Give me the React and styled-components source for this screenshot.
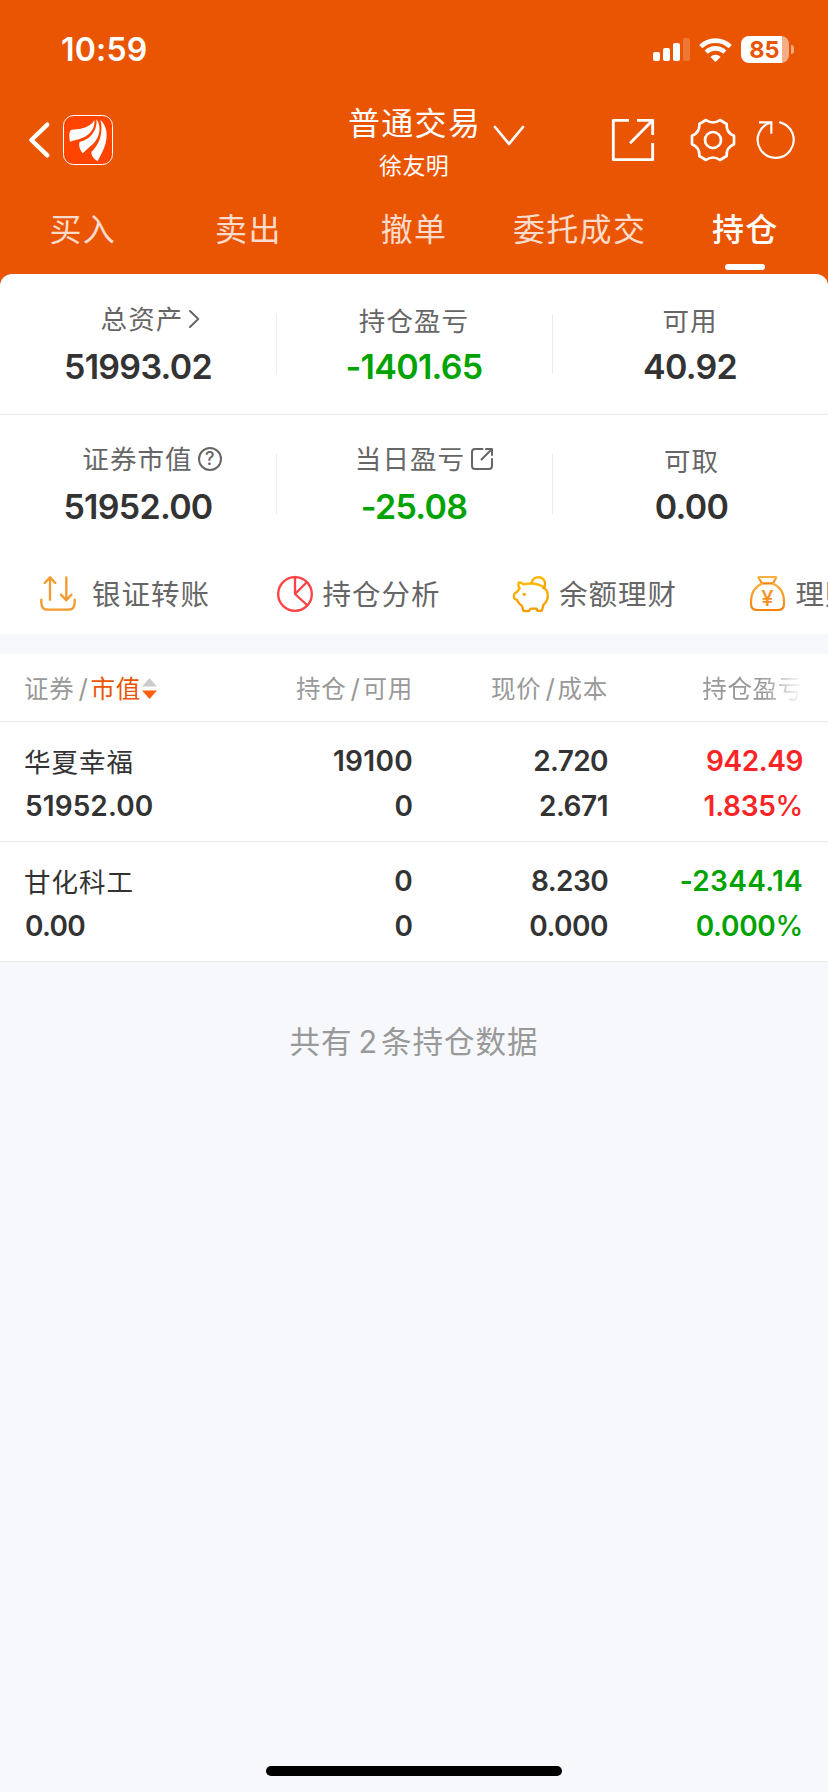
import React, { useState } from "react";
import styled, { createGlobalStyle } from "styled-components";

const GlobalStyle = createGlobalStyle`
  * {
    box-sizing: border-box;
  }
  body {
    margin: 0;
    background: #f6f8fb;
    font-family: Inter, "Noto Sans CJK SC", sans-serif;
    color: #333;
  }
`;

const Screen = styled.div`
  width: 828px;
  height: 1792px;
  display: flex;
  flex-direction: column;
  overflow: hidden;
`;

const Top = styled.div`
  background: #ea5504;
`;

const StatusBar = styled.div`
  height: 99px;
  padding: 0 34px 0 61px;
  display: flex;
  align-items: center;
  justify-content: space-between;
  color: #fff;
`;

const Time = styled.div`
  font-size: 32px;
  font-weight: 600;
  line-height: 40px;
  letter-spacing: 0.2px;
`;

const StatusIcons = styled.div`
  display: flex;
  align-items: center;
  gap: 9px;
`;

const Battery = styled.div`
  display: flex;
  align-items: center;
  gap: 2px;
`;

const BatteryBody = styled.div`
  width: 48px;
  height: 27px;
  padding-right: 1px;
  border-radius: 8px;
  background: linear-gradient(90deg, #fff 41px, #f5ad86 41px);
  color: #ea5504;
  font-size: 23.5px;
  font-weight: 700;
  line-height: 28px;
  text-align: center;
`;

const BatteryTip = styled.div`
  width: 3px;
  height: 9px;
  border-radius: 0 4px 4px 0;
  background: #f5ad86;
`;

const NavBar = styled.div`
  height: 82px;
  padding: 0 33px 0 28px;
  display: grid;
  grid-template-columns: 320px 1fr 185px;
  align-items: center;
  color: #fff;
`;

const NavLeft = styled.div`
  display: flex;
  align-items: center;
  gap: 13px;
`;

const NavTitle = styled.div`
  padding-top: 3px;
`;

const TitleText = styled.div`
  display: flex;
  align-items: center;
  gap: 13px;
  font-size: 32px;
  line-height: 36px;
  letter-spacing: 1.3px;
`;

const ChevronWrap = styled.span`
  display: flex;
  padding-top: 24px;
  height: 36px;
  align-items: center;
`;

const UserName = styled.div`
  margin-top: 12px;
  padding-left: 31px;
  font-size: 23px;
  line-height: 24px;
  letter-spacing: 0.4px;
`;

const NavRight = styled.div`
  display: flex;
  align-items: center;
  justify-content: flex-end;
`;

const Tabs = styled.div`
  height: 93px;
  display: grid;
  grid-template-columns: repeat(5, 1fr);
`;

const Tab = styled.div`
  display: flex;
  flex-direction: column;
  align-items: center;
  padding-top: 29px;
  font-size: 32px;
  line-height: 40px;
  letter-spacing: 1.3px;
  white-space: nowrap;
  cursor: pointer;
  font-weight: ${(props) => (props.$active ? 500 : 400)};
  color: ${(props) => (props.$active ? "#fff" : "#fbdccc")};
  &:after {
    content: "";
    width: 40px;
    height: 6px;
    margin-top: 14px;
    border-radius: 3px;
    background: ${(props) => (props.$active ? "#fff" : "transparent")};
  }
`;

const Summary = styled.div`
  background: #fff;
  border-radius: 12px 12px 0 0;
`;

const SummaryRow = styled.div`
  height: 140px;
  display: grid;
  grid-template-columns: repeat(3, 276px);
  & + & {
    box-shadow: inset 0 1px #ebebeb;
  }
`;

const Metric = styled.div`
  display: flex;
  flex-direction: column;
  align-items: center;
  padding-top: ${(props) => (props.$raised ? 30 : 32)}px;
  & + & {
    background: linear-gradient(#ebebeb, #ebebeb) 0 40px / 1px 60px no-repeat;
  }
`;

const MetricLabel = styled.div`
  display: flex;
  align-items: center;
  gap: ${(props) => props.$gap || 0}px;
  padding-left: ${(props) => props.$shift || 0}px;
  margin-bottom: ${(props) => (props.$raised ? 13 : 11)}px;
  font-size: 26.5px;
  line-height: 30px;
  letter-spacing: 1.1px;
  color: #666;
`;

const MetricValue = styled.div`
  padding-left: ${(props) => props.$shift || 0}px;
  font-size: 34px;
  font-weight: 600;
  line-height: 40px;
  letter-spacing: -0.7px;
  color: ${(props) => props.$color || "#333"};
`;

const QuickMenu = styled.div`
  height: 80px;
  padding-left: 40px;
  background: #fff;
  display: flex;
  align-items: center;
  overflow: hidden;
`;

const QuickItem = styled.div`
  flex: none;
  width: 236.5px;
  display: flex;
  align-items: center;
  gap: ${(props) => props.$gap || 10}px;
`;

const QuickName = styled.div`
  padding-top: 2px;
  font-size: 28.5px;
  line-height: 36px;
  letter-spacing: 1px;
  color: #666;
  white-space: nowrap;
`;

const Table = styled.div`
  margin-top: 20px;
  background: #fff;
`;

const TableHead = styled.div`
  height: 68px;
  padding: 2px 25px 0;
  display: grid;
  grid-template-columns: 193px 195px 195px 195px;
  align-items: center;
  border-bottom: 1px solid #ebebeb;
  font-size: 24.5px;
  line-height: 32px;
  letter-spacing: 0.7px;
  color: #999;
`;

const HeadCell = styled.div`
  display: flex;
  align-items: center;
  justify-content: ${(props) => (props.$left ? "flex-start" : "flex-end")};
  margin-left: ${(props) => (props.$left ? -1 : 0)}px;
  ${(props) =>
    props.$fade &&
    "mask-image: linear-gradient(90deg, #000 calc(100% - 40px), transparent);"}
`;

const Slash = styled.span`
  margin: 0 2px 0 4px;
  font-size: 26px;
`;

const Sorted = styled.span`
  color: #ea5504;
  margin-right: 1px;
`;

const TableRow = styled.div`
  height: 120px;
  padding: 17px 25px 0;
  display: grid;
  grid-template-columns: 193px 195px 195px 195px;
  border-bottom: 1px solid #ebebeb;
`;

const Cell = styled.div`
  display: flex;
  flex-direction: column;
  align-items: ${(props) => (props.$left ? "flex-start" : "flex-end")};
  font-size: 28px;
  font-weight: 600;
  line-height: 45px;
  color: ${(props) => props.$color || "#333"};
`;

const Num = styled.div`
  letter-spacing: ${(props) => props.$track || 0}px;
`;

const StockName = styled.div`
  padding-top: 1px;
  margin: 0 0 -1px -1px;
  font-size: 26.5px;
  font-weight: 400;
  letter-spacing: 1px;
`;

const Percent = styled.span`
  font-weight: 500;
`;

const Footer = styled.div`
  flex: 1;
  padding-top: 60px;
  font-size: 30.5px;
  line-height: 40px;
  letter-spacing: 1px;
  text-align: center;
  color: #999;
`;

const FooterCount = styled.span`
  margin: 0 3px 0 6px;
`;

const HomeBar = styled.div`
  width: 296px;
  height: 10px;
  margin: 0 auto 16px;
  border-radius: 5px;
  background: #000;
`;

const Icon = styled.svg`
  flex: none;
  display: block;
  overflow: visible;
  fill: none;
  stroke: ${(props) => props.$stroke || "#fff"};
  stroke-linecap: round;
  stroke-linejoin: round;
  margin-left: ${(props) => props.$ml || 0}px;
`;

const SignalIcon = () => (
  <Icon width="37" height="23" viewBox="0 0 37 23">
    <g fill="#fff" stroke="none">
      <rect x="0" y="14" width="7" height="9" rx="2" />
      <rect x="10" y="10" width="7" height="13" rx="2" />
      <rect x="20" y="5" width="7" height="18" rx="2" />
      <rect x="30" y="0" width="7" height="23" rx="2" opacity="0.2" />
    </g>
  </Icon>
);

const WifiIcon = () => (
  <Icon width="33" height="24" viewBox="0 0 33 24">
    <g strokeWidth="4.6" strokeLinecap="butt">
      <path d="M1.8 8.6A21 21 0 0 1 31.2 8.6" />
      <path d="M7.2 14.2A13.2 13.2 0 0 1 25.8 14.2" />
    </g>
    <path
      d="M16.5 24L11.4 18.9A7.4 7.4 0 0 1 21.6 18.9Z"
      fill="#fff"
      stroke="none"
    />
  </Icon>
);

const BackIcon = () => (
  <Icon width="22" height="36" viewBox="0 0 66 108" strokeWidth="13">
    <path d="M58 8L10 54L58 100" />
  </Icon>
);

const LogoIcon = () => (
  <Icon width="50" height="50" viewBox="0 0 150 150">
    <rect
      x="1.5"
      y="1.5"
      width="147"
      height="147"
      rx="30"
      fill="#ff4400"
      strokeWidth="3"
    />
    <g fill="#fff" stroke="none">
      <path d="M94 14C88 30 66 42 27 44C19 45 17 58 21 80C44 72 68 70 84 50C93 38 96 26 94 14Z" />
      <path d="M100 13C113 27 114 58 96 80C86 92 70 103 59 115C50 102 46 90 50 81C66 76 80 70 90 54C100 40 102 26 100 13Z" />
      <path d="M112 15C130 30 135 58 128 84C122 106 112 122 104 138C92 132 85 122 85 111C96 100 108 84 113 62C117 44 116 28 112 15Z" />
    </g>
  </Icon>
);

const ChevronDownIcon = () => (
  <Icon
    width="30"
    height="20"
    viewBox="0 0 90 60"
    strokeWidth="8"
    strokeLinejoin="miter"
  >
    <path d="M3 3L45 54L87 3" />
  </Icon>
);

const ShareIcon = () => (
  <Icon width="42" height="42" viewBox="0 0 126 126" strokeWidth="8.5">
    <path d="M51 4H4V122H122V72" strokeLinecap="butt" />
    <path d="M75 4H122V48M122 4L54 73" strokeLinecap="butt" />
  </Icon>
);

const GearIcon = () => (
  <Icon
    $ml={37}
    width="44"
    height="44"
    viewBox="-66 -66 132 132"
    strokeWidth="8"
  >
    <path d="M-21-60Q0-45 21-60L41-48Q39-22 63-12.500L63 12.500Q39 22 41 48L21 60Q0 45-21 60L-41 48Q-39 22-63 12.500L-63-12.500Q-39-22-41-48Z" />
    <circle r="24" />
  </Icon>
);

const RefreshIcon = () => (
  <Icon $ml={22} width="38" height="38" viewBox="0 0 114 114" strokeWidth="6.500">
    <path d="M69 4A54 54 0 1 1 43 4" />
    <path d="M6 4H43V38" strokeLinecap="butt" />
  </Icon>
);

const ArrowRightIcon = () => (
  <Icon $stroke="#666" width="10" height="18" viewBox="0 0 10 18" strokeWidth="2">
    <path d="M1 1L9.300 9L1 17" />
  </Icon>
);

const HelpMark = styled.span`
  width: 24px;
  height: 24px;
  border: 2px solid #666;
  border-radius: 50%;
  font-size: 18px;
  font-weight: 500;
  line-height: 20px;
  letter-spacing: 0;
  text-align: center;
`;

const OpenIcon = () => (
  <Icon $stroke="#666" width="22" height="22" viewBox="0 0 22 22" strokeWidth="2">
    <path d="M11.500 1H4Q1 1 1 4V18Q1 21 4 21H18Q21 21 21 18V11" />
    <path d="M15 1H21V7M21 1L10.500 11.500" />
  </Icon>
);

const TransferIcon = () => (
  <Icon $stroke="#f39a2e" width="36" height="36" viewBox="0 0 108 108" strokeWidth="7">
    <path d="M30 71V5M14 21L30 4L46 21" />
    <path d="M79 4V73M63 56L79 73L94 56" />
    <path d="M4 71V80Q4 101 24 101H84Q104 101 104 80V71" />
  </Icon>
);

const PieIcon = () => (
  <Icon $stroke="#ff4246" width="36" height="36" viewBox="0 0 108 108" strokeWidth="7">
    <circle cx="54" cy="54" r="50.500" />
    <path d="M54 3V54L90 18M54 54L90 87" />
  </Icon>
);

const PigIcon = () => (
  <Icon $stroke="url(#pigFill)" width="36" height="36" viewBox="0 0 108 108" strokeWidth="7">
    <defs>
      <linearGradient id="pigFill" x1="0" y1="0" x2="0" y2="1">
        <stop offset="0" stopColor="#ffb800" />
        <stop offset="1" stopColor="#f79a05" />
      </linearGradient>
    </defs>
    <path d="M17 20Q23 18 32 25C65 18 98 27 104 52C107 70 99 80 91 87L87 103Q80 106 73 104L71 98H53L49 104Q40 107 31 104L27 90Q17 83 12 72L4 68Q1 60 4 54Q15 46 20 37Q14 29 17 20Z" />
    <path d="M56 21C58-3 98-2 96 24Q96 31 92 37" />
    <circle cx="34" cy="55" r="5" fill="#f9a400" stroke="none" />
  </Icon>
);

const BagIcon = () => (
  <Icon $stroke="url(#bagFill)" width="36" height="36" viewBox="0 0 108 108" strokeWidth="6.500">
    <defs>
      <linearGradient id="bagFill" x1="0" y1="0" x2="0" y2="1">
        <stop offset="0" stopColor="#fbb040" />
        <stop offset="1" stopColor="#f5820a" />
      </linearGradient>
    </defs>
    <path d="M27 3H77Q80 3 78 6L69 22H36L26 6Q25 3 27 3Z" />
    <path d="M36 23C14 32 3 50 3 77V84Q3 102 21 102H84Q102 102 102 84V77C102 50 91 32 69 23" />
    <text
      x="52"
      y="90"
      fontSize="66"
      fontWeight="500"
      textAnchor="middle"
      fill="#f7901e"
      stroke="none"
    >
      ¥
    </text>
  </Icon>
);

const SortIcon = () => (
  <Icon width="15" height="21" viewBox="0 0 15 21">
    <g stroke="none">
      <path d="M7.500 0L15 8.500H0Z" fill="#ccc" />
      <path d="M0 12.500H15L7.500 21Z" fill="#ff6010" />
    </g>
  </Icon>
);

const GREEN = "#00a300";
const RED = "#fa2425";

const tabs = ["买入", "卖出", "撤单", "委托成交", "持仓"];

const metrics = [
  [
    { label: "总资产", value: "51993.02", icon: <ArrowRightIcon />, gap: 6, shift: 24 },
    { label: "持仓盈亏", value: "-1401.65", color: GREEN },
    { label: "可用", value: "40.92" },
  ],
  [
    { label: "证券市值", value: "51952.00", icon: <HelpMark>?</HelpMark>, gap: 5, shift: 28 },
    { label: "当日盈亏", value: "-25.08", color: GREEN, icon: <OpenIcon />, gap: 6, shift: 20 },
    { label: "可取", value: "0.00", offset: 3 },
  ],
];

const quickLinks = [
  { name: "银证转账", icon: <TransferIcon />, gap: 16 },
  { name: "持仓分析", icon: <PieIcon /> },
  { name: "余额理财", icon: <PigIcon /> },
  { name: "理财", icon: <BagIcon /> },
];

const holdings = [
  {
    name: "华夏幸福",
    marketValue: "51952.00",
    amount: ["19100", "0"],
    price: ["2.720", "2.671"],
    profit: ["942.49", "1.835"],
    track: { marketValue: 0.1, profit: -0.4 },
    color: RED,
  },
  {
    name: "甘化科工",
    marketValue: "0.00",
    amount: ["0", "0"],
    price: ["8.230", "0.000"],
    profit: ["-2344.14", "0.000"],
    track: { marketValue: -0.7, profit: 0.3 },
    color: GREEN,
  },
];

const App = () => {
  const [activeTab, setActiveTab] = useState("持仓");

  return (
    <Screen>
      <GlobalStyle />
      <Top>
        <StatusBar>
          <Time>10:59</Time>
          <StatusIcons>
            <SignalIcon />
            <WifiIcon />
            <Battery>
              <BatteryBody>85</BatteryBody>
              <BatteryTip />
            </Battery>
          </StatusIcons>
        </StatusBar>
        <NavBar>
          <NavLeft>
            <BackIcon />
            <LogoIcon />
          </NavLeft>
          <NavTitle>
            <TitleText>
              普通交易
              <ChevronWrap>
                <ChevronDownIcon />
              </ChevronWrap>
            </TitleText>
            <UserName>徐友明</UserName>
          </NavTitle>
          <NavRight>
            <ShareIcon />
            <GearIcon />
            <RefreshIcon />
          </NavRight>
        </NavBar>
        <Tabs>
          {tabs.map((tab) => (
            <Tab
              key={tab}
              $active={tab === activeTab}
              onClick={() => setActiveTab(tab)}
            >
              {tab}
            </Tab>
          ))}
        </Tabs>
        <Summary>
          {metrics.map((row, index) => (
            <SummaryRow key={"row_" + index}>
              {row.map((item) => (
                <Metric key={item.label} $raised={!!item.icon}>
                  <MetricLabel
                    $raised={!!item.icon}
                    $gap={item.gap}
                    $shift={item.shift || item.offset}
                  >
                    {item.label}
                    {item.icon}
                  </MetricLabel>
                  <MetricValue $color={item.color} $shift={item.offset}>
                    {item.value}
                  </MetricValue>
                </Metric>
              ))}
            </SummaryRow>
          ))}
        </Summary>
      </Top>
      <QuickMenu>
        {quickLinks.map((link) => (
          <QuickItem key={link.name} $gap={link.gap}>
            {link.icon}
            <QuickName>{link.name}</QuickName>
          </QuickItem>
        ))}
      </QuickMenu>
      <Table>
        <TableHead>
          <HeadCell $left>
            证券<Slash>/</Slash>
            <Sorted>市值</Sorted>
            <SortIcon />
          </HeadCell>
          <HeadCell>
            持仓<Slash>/</Slash>可用
          </HeadCell>
          <HeadCell>
            现价<Slash>/</Slash>成本
          </HeadCell>
          <HeadCell $fade>持仓盈亏</HeadCell>
        </TableHead>
        {holdings.map((stock) => (
          <TableRow key={stock.name}>
            <Cell $left>
              <StockName>{stock.name}</StockName>
              <Num $track={stock.track.marketValue}>{stock.marketValue}</Num>
            </Cell>
            <Cell>
              <Num $track={0.3}>{stock.amount[0]}</Num>
              <Num>{stock.amount[1]}</Num>
            </Cell>
            <Cell>
              <Num $track={-0.6}>{stock.price[0]}</Num>
              <Num $track={-0.5}>{stock.price[1]}</Num>
            </Cell>
            <Cell $color={stock.color}>
              <Num $track={stock.track.profit}>{stock.profit[0]}</Num>
              <Num $track={-0.3}>
                {stock.profit[1]}
                <Percent>%</Percent>
              </Num>
            </Cell>
          </TableRow>
        ))}
      </Table>
      <Footer>
        共有<FooterCount>2</FooterCount>条持仓数据
      </Footer>
      <HomeBar />
    </Screen>
  );
};

export default App;
